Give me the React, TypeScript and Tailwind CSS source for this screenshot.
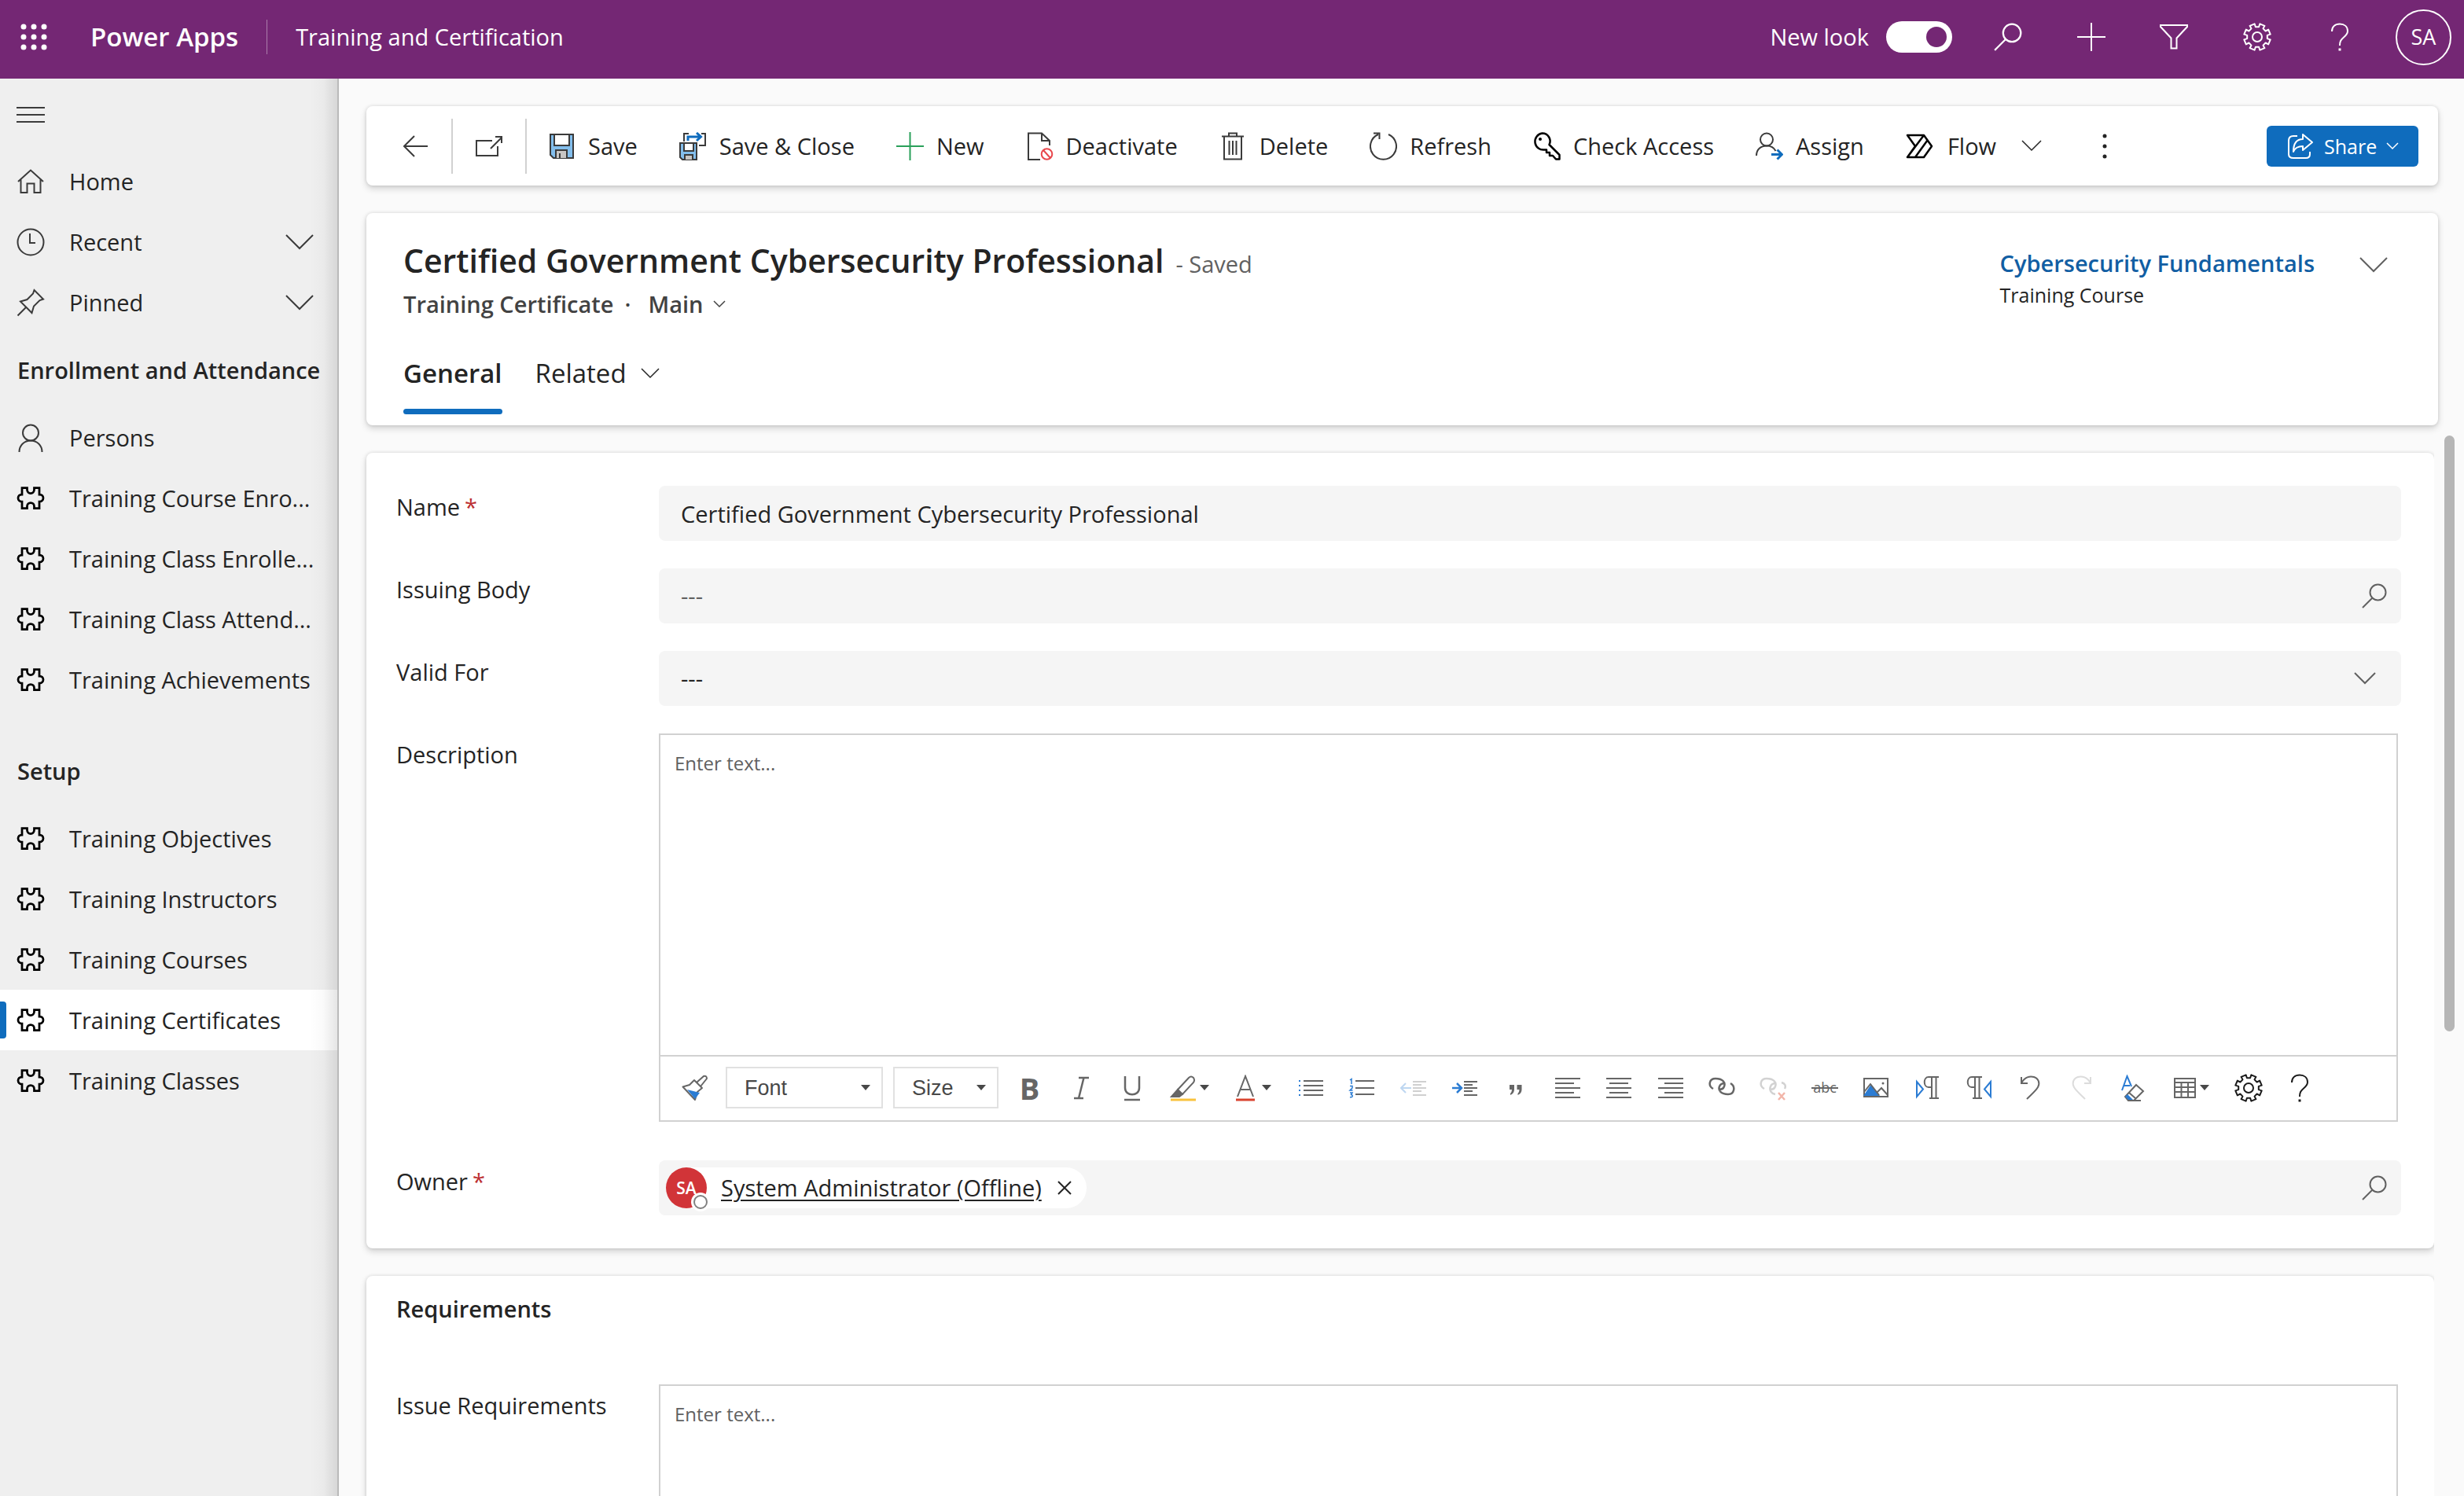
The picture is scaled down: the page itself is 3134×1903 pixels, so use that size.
import { useState, type ReactNode } from "react";

type IconProps = {
  w: number;
  h: number;
  stroke?: number;
  className?: string;
  children: ReactNode;
};

function Icon({ w, h, stroke = 2, className = "", children }: IconProps) {
  return (
    <svg
      width={w}
      height={h}
      viewBox={`0 0 ${w} ${h}`}
      fill="none"
      stroke="currentColor"
      strokeWidth={stroke}
      className={`shrink-0 ${className}`}
      aria-hidden="true"
    >
      {children}
    </svg>
  );
}

const gearPath = (() => {
  const points: string[] = [];
  for (let i = 0; i < 8; i++) {
    const mid = 22.5 + i * 45;
    const corners: [number, number][] = [
      [-13, 13],
      [-11, 17],
      [11, 17],
      [13, 13],
    ];
    corners.forEach(([offset, r]) => {
      const a = ((mid + offset) * Math.PI) / 180;
      points.push(`${(18 + r * Math.sin(a)).toFixed(1)} ${(18 - r * Math.cos(a)).toFixed(1)}`);
    });
  }
  return `M${points.join("L")}Z`;
})();

const GearIcon = () => (
  <Icon w={36} h={36}>
    <path d={gearPath} strokeLinejoin="round" />
    <circle cx="18" cy="18" r="6" />
  </Icon>
);

const HelpIcon = () => (
  <Icon w={24} h={36}>
    <path d="M2 11C2 5 6 1.500 12 1.500S22 5 22 10.500C22 14 20 16 17 18.500C13.500 21.500 12 23.500 12 29" />
    <path d="M12 32.500V35.500" strokeWidth="3" />
  </Icon>
);

const SearchIcon = ({ size = 32 }: { size?: number }) => (
  <svg width={size} height={size} viewBox="0 0 32 32" fill="none" stroke="currentColor" strokeWidth="2" aria-hidden="true">
    <circle cx="20.500" cy="11.500" r="10" />
    <path d="M13.500 18.500L1 31" />
  </svg>
);

const Chevron = ({ w = 26, stroke = 2 }: { w?: number; stroke?: number }) => (
  <Icon w={w} h={w / 2 + 2} stroke={stroke}>
    <path d={`M1 1L${w / 2} ${w / 2}L${w - 1} 1`} />
  </Icon>
);

const Caret = () => (
  <svg width="12" height="7" viewBox="0 0 12 7" fill="#484848" className="shrink-0" aria-hidden="true">
    <path d="M0 0H12L6 7Z" />
  </svg>
);

const PuzzleIcon = () => (
  <Icon w={36} h={30} stroke={2.75} className="text-black">
    <path d="M7 1.500H13.500V4a4.500 4.500 0 0 0 9 0V1.500H29V10H29.500a4.500 4.500 0 0 1 0 9H29V27.500H22.500V25a4.500 4.500 0 0 0-9 0V27.500H7V19H6.500a4.500 4.500 0 0 1 0-9H7Z" />
  </Icon>
);

const HomeIcon = () => (
  <Icon w={36} h={32}>
    <path d="M2 16L18 1.500L34 16M5.500 13V30H13.500V18.500H22.500V30H30.500V13" />
  </Icon>
);

const ClockIcon = () => (
  <Icon w={36} h={36}>
    <circle cx="18" cy="18" r="16.500" />
    <path d="M17 7V19H24" />
  </Icon>
);

const PinIcon = () => (
  <Icon w={36} h={36}>
    <path d="M22.500 2L34 13.500L29.500 15L22 22.500L19.500 31L5 16.500L13.500 14L21 6.500ZM12 24L1.500 34.500" />
  </Icon>
);

const PersonIcon = () => (
  <Icon w={36} h={36} className="text-[#3b3b3b]">
    <circle cx="18" cy="11.500" r="10" />
    <path d="M3.500 36C3.500 27.500 10 21.500 18 21.500S32.500 27.500 32.500 36" />
  </Icon>
);

const SaveIcon = () => (
  <Icon w={35} h={36} className="text-[#3b3b3b]">
    <path d="M3 3H32V33H7L3 29Z" fill="#83beec" />
    <path d="M8 3H27V17H8Z" fill="#fff" />
    <path d="M10 33V23H24V33" fill="#c8c6c4" />
    <path d="M15 33V27" />
  </Icon>
);

const SaveCloseIcon = () => (
  <Icon w={35} h={36} className="text-[#3b3b3b]">
    <path d="M6 12V2H12M28 2H33V17H25" />
    <path d="M1 14H22V35H4L1 32Z" fill="#83beec" />
    <path d="M6 14H18V24H6Z" fill="#fff" />
    <path d="M7 35V29H17V35" fill="#c8c6c4" />
    <path d="M11 11V6H27M22 1L27.500 6L22 11" stroke="#0f6cbd" strokeWidth="3" />
  </Icon>
);

const NewIcon = () => (
  <Icon w={35} h={36} className="text-[#2aa05a]">
    <path d="M17.500 0V36M0 18H35" />
  </Icon>
);

const DeactivateIcon = () => (
  <Icon w={35} h={36} className="text-[#3b3b3b]">
    <path d="M18 35H3V1.500H20L30 11V17M20 1.500V11H30" />
    <g stroke="#e8474c">
      <circle cx="26.500" cy="28" r="6.800" />
      <path d="M22 23L31 33" />
    </g>
  </Icon>
);

const DeleteIcon = () => (
  <Icon w={35} h={36} className="text-[#3b3b3b]">
    <path d="M3 5.500H31M12 5V1.500H22V5M6 6V34.500H28V6M12.500 11V29M17 11V29M21.500 11V29" />
  </Icon>
);

const RefreshIcon = () => (
  <Icon w={35} h={36} className="text-[#3b3b3b]">
    <path d="M24 3A16.500 16.500 0 1 1 11 3M5 1.500H12.500V9" />
  </Icon>
);

const KeyIcon = () => (
  <Icon w={35} h={36} className="text-black">
    <path
      d="M11.500 1.500A10 10 0 1 0 14.500 22.500L17 22.500V26H21V30H25L29 34.500H33.500V29L20.500 16A10 10 0 0 0 11.500 1.500Z"
      strokeLinejoin="round"
      strokeWidth="2.500"
    />
    <circle cx="9" cy="9" r="2" fill="currentColor" stroke="none" />
  </Icon>
);

const AssignIcon = () => (
  <Icon w={35} h={36} className="text-[#3b3b3b]">
    <circle cx="14" cy="9.500" r="8" />
    <path d="M1 30C1 22 6.500 17.500 14 17.500C20 17.500 23.500 20 25.500 24" />
    <path d="M20 28.500H33M27.500 22.500L33.500 28.500L27.500 34.500" stroke="#0f6cbd" strokeWidth="3" />
  </Icon>
);

const FlowIcon = () => (
  <Icon w={35} h={36} stroke={2.5} className="text-black">
    <path d="M2 4H23L33 18L23 32H2L12 18ZM23 4L2 32M27.500 10.500L12 32" strokeLinejoin="round" />
  </Icon>
);

const ShareIcon = () => (
  <Icon w={34} h={34}>
    <path
      d="M13 4H8Q2 4 2 10V27Q2 32 8 32H24Q29 32 29 27V24M20 2L32 12L20 22V17C14 17 10 19 8 24C8 14 12 8 20 8Z"
      strokeLinejoin="round"
    />
  </Icon>
);

function NavItem({
  icon,
  label,
  expandable,
  selected,
}: {
  icon: ReactNode;
  label: string;
  expandable?: boolean;
  selected?: boolean;
}) {
  return (
    <li>
      <a
        href="#"
        aria-current={selected ? "page" : undefined}
        className={`relative flex h-[77px] items-center gap-[31px] pr-[30px] pl-[21px] ${selected ? "bg-white" : ""}`}
      >
        {selected && <span className="absolute left-0 h-[47px] w-2 rounded-r bg-[#0f6cbd]" />}
        {icon}
        <span className="flex-1 whitespace-nowrap">{label}</span>
        {expandable && <Chevron w={36} />}
      </a>
    </li>
  );
}

const enrollmentItems = [
  "Training Course Enro...",
  "Training Class Enrolle...",
  "Training Class Attend...",
  "Training Achievements",
];

const setupItems = [
  "Training Objectives",
  "Training Instructors",
  "Training Courses",
  "Training Certificates",
  "Training Classes",
];

const commands = [
  { label: "Save", icon: <SaveIcon /> },
  { label: "Save & Close", icon: <SaveCloseIcon /> },
  { label: "New", icon: <NewIcon /> },
  { label: "Deactivate", icon: <DeactivateIcon /> },
  { label: "Delete", icon: <DeleteIcon /> },
  { label: "Refresh", icon: <RefreshIcon /> },
  { label: "Check Access", icon: <KeyIcon /> },
  { label: "Assign", icon: <AssignIcon /> },
];

// Rich text toolbar icons, all drawn on a 34px canvas
const editorIcons: { label: string; icon: ReactNode }[] = [
  {
    label: "Bulleted list",
    icon: (
      <>
        <path d="M8 8H33M8 14H33M8 20H33M8 26H33" />
        <path d="M2 8H4M2 14H4M2 20H4M2 26H4" stroke="#2b7cd3" />
      </>
    ),
  },
  {
    label: "Numbered list",
    icon: (
      <>
        <path d="M9 8H33M9 17H33M9 25H33" />
        <path
          d="M2 7L4 5.500V12M2 14.500H5V17L2 20H5.500M2 23H5L3.500 25.500Q6 26 5 28Q4 29 2 28.500"
          stroke="#2b7cd3"
          strokeWidth="1.500"
        />
      </>
    ),
  },
  {
    label: "Decrease indent",
    icon: (
      <g opacity="0.300">
        <path d="M16 9H33M16 13H27M16 17H33M16 21H27M16 26H33" />
        <path d="M1 17H14M7 11L1 17L7 23" stroke="#2b7cd3" />
      </g>
    ),
  },
  {
    label: "Increase indent",
    icon: (
      <>
        <path d="M16 9H33M16 13H27M16 17H33M16 21H27M16 26H33" />
        <path d="M1 17H13M7 11L13 17L7 23" stroke="#2b7cd3" strokeWidth="2.500" />
      </>
    ),
  },
  {
    label: "Block quote",
    icon: (
      <path
        d="M9 13H15V19Q15 24 10 26V24Q12 22 12 19H9ZM18.500 13H24.500V19Q24.500 24 19.500 26V24Q21.500 22 21.500 19H18.500Z"
        fill="#666"
        stroke="none"
      />
    ),
  },
  { label: "Align left", icon: <path d="M1 5H33M1 11H25M1 17H33M1 23H25M1 29H33" /> },
  { label: "Align center", icon: <path d="M1 5H33M5 11H29M1 17H33M5 23H29M1 29H33" /> },
  { label: "Align right", icon: <path d="M1 5H33M9 11H33M1 17H33M9 23H33M1 29H33" /> },
  {
    label: "Link",
    icon: (
      <path
        d="M6 18C-1 14 1 5 9 5C18 5 22 10 20 15C19 18 17 19 13 19M28 11C35 15 33 25 25 25C16 25 12 20 14 15C15 12 17 11 21 11"
        strokeWidth="2.500"
      />
    ),
  },
  {
    label: "Unlink",
    icon: (
      <>
        <path
          d="M6 18C-1 14 1 5 9 5C18 5 22 10 20 15C19 18 17 19 13 19M32 18C34 14 32 11 28 10M20 25C15 24 12 20 14 15C15 12 17 11 21 11"
          stroke="#d2d2d2"
          strokeWidth="2.500"
        />
        <path d="M24 23L32 32M32 23L24 32" stroke="#f2b5a9" strokeWidth="2.500" />
      </>
    ),
  },
  {
    label: "Strikethrough",
    icon: (
      <>
        <text x="17" y="23" textAnchor="middle" fontSize="18" fill="#666" stroke="none">
          abc
        </text>
        <path d="M0 17H34" />
      </>
    ),
  },
  {
    label: "Insert image",
    icon: (
      <>
        <path d="M2 5H32V28H2Z" />
        <path d="M3 26L11 14L20 26Z" fill="#2b7cd3" stroke="#2b7cd3" />
        <path d="M2 22L10 12L21 26M19 22L24 17L32 26" />
        <circle cx="26" cy="11" r="1.500" fill="#666" stroke="none" />
      </>
    ),
  },
  {
    label: "Left to right",
    icon: (
      <>
        <path d="M3 9L11 18.500L3 28Z" stroke="#2b7cd3" />
        <path d="M31 3H18C11 3 11 16 18 16H21M22 3V30M27.500 3V30M19 30H31" />
      </>
    ),
  },
  {
    label: "Right to left",
    icon: (
      <>
        <path d="M32 9L24 18.500L32 28Z" stroke="#2b7cd3" />
        <path d="M21 3H8C1 3 1 16 8 16H11M12 3V30M17.500 3V30M9 30H21" />
      </>
    ),
  },
  { label: "Undo", icon: <path d="M6 3V11H14M6 11C10 3 17 1.500 22 3C28 5 30 11 27 16C24 21 18 26 13 31" /> },
  {
    label: "Redo",
    icon: <path d="M28 3V11H20M28 11C24 3 17 1.500 12 3C6 5 4 11 7 16C10 21 16 26 21 31" stroke="#dcdcdc" />,
  },
  {
    label: "Clear formatting",
    icon: (
      <>
        <path d="M3 20L9.500 2L15 15M5 14H13" stroke="#2b7cd3" />
        <path d="M21 13L30 21L18 33H11L7 28Z" />
        <path d="M10 25L17 32H11L7 28Z" fill="#2b7cd3" stroke="none" />
        <path d="M17 33H27M12 23L20 30" />
      </>
    ),
  },
];

function ToolButton({ label, children }: { label: string; children: ReactNode }) {
  return (
    <button type="button" aria-label={label} title={label} className="flex h-full w-[65px] items-center justify-center">
      {children}
    </button>
  );
}

function EditorToolbar() {
  return (
    <div className="flex h-[83px] items-center border-t-2 border-[#d1d1d1] pb-0.5 pl-[11px] text-[#666]">
      <ToolButton label="Format painter">
        <Icon w={34} h={34}>
          <path d="M1.500 15.500L10 13L16 7L26 17L20 22L17 32Z" strokeLinejoin="round" />
          <path d="M7 19L23 23L17 31Z" fill="#2b7cd3" stroke="none" />
          <path d="M19 10L28 2Q32 1 32 5L24 15" />
        </Icon>
      </ToolButton>
      <div className="relative ml-[7px] flex items-center">
        <select
          aria-label="Font"
          className="h-[53px] w-[200px] appearance-none border-2 border-[#e1e1e1] bg-white pl-[22px] font-['Liberation_Sans',Arial,sans-serif] text-[27px] text-[#484848]"
        >
          <option>Font</option>
        </select>
        <span className="pointer-events-none absolute right-4">
          <Caret />
        </span>
      </div>
      <div className="relative ml-[13px] flex items-center">
        <select
          aria-label="Size"
          className="h-[53px] w-[134px] appearance-none border-2 border-[#e1e1e1] bg-white pl-[22px] font-['Liberation_Sans',Arial,sans-serif] text-[27px] text-[#484848]"
        >
          <option>Size</option>
        </select>
        <span className="pointer-events-none absolute right-4">
          <Caret />
        </span>
      </div>
      <div className="ml-[7px] flex h-full">
        <ToolButton label="Bold">
          <span className="text-[38px] leading-none font-bold">B</span>
        </ToolButton>
        <ToolButton label="Italic">
          <Icon w={34} h={34}>
            <path d="M14 4H27M8 30H20M20.500 4L14 30" strokeWidth="2.500" />
          </Icon>
        </ToolButton>
        <ToolButton label="Underline">
          <Icon w={34} h={34}>
            <path d="M8 2V17C8 28 26 28 26 17V2M7 32H27" strokeWidth="2.500" />
          </Icon>
        </ToolButton>
        <button type="button" aria-label="Highlight color" className="flex w-[81px] items-center justify-center gap-1">
          <Icon w={34} h={34}>
            <path d="M10 19L24 4Q27 1 30 4Q32 7 30 10L16 25Q12 24 10 19Z" />
            <path d="M10 19L16 25L12 28H2Z" fill="#666" />
            <path d="M1 32H33" stroke="#f9c23c" strokeWidth="3" />
          </Icon>
          <Caret />
        </button>
        <button type="button" aria-label="Font color" className="flex w-[81px] items-center justify-center gap-2">
          <Icon w={26} h={34}>
            <path d="M3 28L13 2L23 28M7 19H19" />
            <path d="M1 32H25" stroke="#d9432f" strokeWidth="3" />
          </Icon>
          <Caret />
        </button>
      </div>
      <div className="flex h-full w-[1112px]">
        {editorIcons.map(({ label, icon }) => (
          <button key={label} type="button" aria-label={label} title={label} className="flex flex-1 items-center justify-center">
            <Icon w={34} h={34}>
              {icon}
            </Icon>
          </button>
        ))}
      </div>
      <button type="button" aria-label="Table" className="flex h-full w-[81px] items-center justify-center gap-1">
        <Icon w={30} h={34}>
          <path d="M2 5H28V29H2ZM2 10H28M2 16H28M2 22H28M10.500 10V29M19 10V29" />
        </Icon>
        <Caret />
      </button>
      <span className="flex h-full text-[#1b1b1b]">
        <ToolButton label="Editor settings">
          <GearIcon />
        </ToolButton>
        <ToolButton label="Editor help">
          <HelpIcon />
        </ToolButton>
      </span>
    </div>
  );
}

function RichText({ id, toolbar }: { id: string; toolbar?: boolean }) {
  const [text, setText] = useState("");
  return (
    <div className="mr-1 flex min-w-0 flex-1 flex-col border-2 border-[#d1d1d1] bg-white">
      <textarea
        id={id}
        value={text}
        onChange={(e) => setText(e.target.value)}
        placeholder="Enter text..."
        className="block h-[407px] resize-none px-[18px] py-[18px] text-[24px] leading-9 outline-none placeholder:text-[#616161]"
      />
      {toolbar && <EditorToolbar />}
    </div>
  );
}

function Field({ id, label, required, children }: { id: string; label: string; required?: boolean; children: ReactNode }) {
  return (
    <div className="flex items-start">
      <label htmlFor={id} className="w-[334px] shrink-0 pt-[9px] leading-9">
        {label}
        {required && <span className="ml-[6px] text-[#bc2f32]">*</span>}
      </label>
      {children}
    </div>
  );
}

const cardShadow = "shadow-[0_0_4px_rgba(0,0,0,0.12),0_4px_9px_rgba(0,0,0,0.16)]";

export default function App() {
  const [newLook, setNewLook] = useState(true);
  const [name, setName] = useState("Certified Government Cybersecurity Professional");

  return (
    <div className="flex h-screen flex-col overflow-hidden bg-[#fafafa] font-['Segoe_UI','Open_Sans','Noto_Sans',sans-serif] text-[29px] leading-10 text-[#242424]">
      <header className="flex h-[100px] shrink-0 items-center bg-[#742774] pr-4 pb-[6px] pl-[25px] text-white">
        <button type="button" aria-label="App launcher">
          <svg width="36" height="36" viewBox="0 0 36 36" fill="currentColor" aria-hidden="true">
            {[5, 18, 31].map((y) => [5, 18, 31].map((x) => <circle key={`${x}-${y}`} cx={x} cy={y} r="3.500" />))}
          </svg>
        </button>
        <span className="ml-[54px] text-[33px] font-semibold">Power Apps</span>
        <span className="mx-9 h-11 w-px bg-white/40" />
        <span>Training and Certification</span>

        <div className="ml-auto flex items-center">
          <label className="flex cursor-pointer items-center gap-[22px]">
            New look
            <input
              type="checkbox"
              role="switch"
              checked={newLook}
              onChange={(e) => setNewLook(e.target.checked)}
              className="peer sr-only"
            />
            <span className="flex h-10 w-[84px] items-center rounded-full bg-white px-[7px] peer-checked:justify-end">
              <span className="size-[26px] rounded-full bg-[#742774]" />
            </span>
          </label>
          <div className="ml-[18px] flex">
            <button type="button" aria-label="Search" className="flex w-[106px] justify-center">
              <SearchIcon size={36} />
            </button>
            <button type="button" aria-label="Create" className="flex w-[105px] justify-center">
              <Icon w={36} h={36}>
                <path d="M18 0V36M0 18H36" />
              </Icon>
            </button>
            <button type="button" aria-label="Filter" className="flex w-[106px] justify-center">
              <Icon w={36} h={36}>
                <path d="M1 3H35V5L21.500 19.500V32.500H14.500V19.500L1 5Z" />
              </Icon>
            </button>
            <button type="button" aria-label="Settings" className="flex w-[105px] justify-center">
              <GearIcon />
            </button>
            <button type="button" aria-label="Help" className="flex w-[106px] justify-center">
              <HelpIcon />
            </button>
          </div>
          <button
            type="button"
            aria-label="Account"
            className="ml-[18px] flex size-[71px] items-center justify-center rounded-full border-2 border-white text-[27px]"
          >
            SA
          </button>
        </div>
      </header>

      <div className="flex min-h-0 flex-1">
        <nav className="relative w-[431px] shrink-0 border-r-2 border-[#bababa] bg-[#efefef]">
          <button type="button" aria-label="Site map" className="flex h-[92px] items-center pl-[21px] text-[#3b3b3b]">
            <Icon w={36} h={24}>
              <path d="M0 3H36M0 12H36M0 21H36" />
            </Icon>
          </button>
          <ul className="[&_svg]:text-[#3b3b3b]">
            <NavItem icon={<HomeIcon />} label="Home" />
            <NavItem icon={<ClockIcon />} label="Recent" expandable />
            <NavItem icon={<PinIcon />} label="Pinned" expandable />
          </ul>
          <h2 className="flex h-[95px] items-center pl-[22px] font-semibold whitespace-nowrap">Enrollment and Attendance</h2>
          <ul>
            <NavItem icon={<PersonIcon />} label="Persons" />
            {enrollmentItems.map((item) => (
              <NavItem key={item} icon={<PuzzleIcon />} label={item} />
            ))}
          </ul>
          <h2 className="mt-[30px] flex h-[95px] items-center pl-[22px] font-semibold">Setup</h2>
          <ul>
            {setupItems.map((item) => (
              <NavItem key={item} icon={<PuzzleIcon />} label={item} selected={item === "Training Certificates"} />
            ))}
          </ul>
          <div className="pointer-events-none absolute inset-y-0 right-0 w-9 bg-linear-to-r from-black/0 via-black/2 to-black/10" />
        </nav>

        <main className="flex min-w-0 flex-1 flex-col pt-[35px]">
          <div className={`mr-[33px] ml-[35px] flex h-[101px] shrink-0 items-center rounded-lg bg-white pr-[25px] ${cardShadow}`}>
            <button type="button" aria-label="Back" className="flex w-[108px] items-center justify-center pl-[16px] text-[#3b3b3b]">
              <Icon w={32} h={28}>
                <path d="M32 14H2M15 1L2 14L15 27" />
              </Icon>
            </button>
            <span className="h-[70px] w-0.5 bg-[#d1d1d1]" />
            <button type="button" aria-label="Open in new window" className="flex w-[92px] items-center justify-center text-[#3b3b3b]">
              <Icon w={36} h={28}>
                <path d="M22 7H2V26H29V14M20 17L34 3M26 2H34V10" />
              </Icon>
            </button>
            <span className="h-[70px] w-0.5 bg-[#d1d1d1]" />
            <div className="ml-[27px] flex items-center gap-[53px]">
              {commands.map(({ label, icon }) => (
                <button key={label} type="button" className="flex items-center gap-4 whitespace-nowrap">
                  {icon}
                  {label}
                </button>
              ))}
              <button type="button" className="flex items-center gap-[18px]">
                <FlowIcon />
                Flow
                <span className="ml-[14px]">
                  <Chevron stroke={1.5} />
                </span>
              </button>
            </div>
            <button type="button" aria-label="More commands" className="ml-[76px]">
              <svg width="8" height="32" viewBox="0 0 8 32" fill="currentColor" aria-hidden="true">
                <circle cx="4" cy="3" r="2.500" />
                <circle cx="4" cy="16" r="2.500" />
                <circle cx="4" cy="29" r="2.500" />
              </svg>
            </button>
            <button
              type="button"
              className="ml-auto flex h-[52px] w-[193px] items-center rounded-md bg-[#0f6cbd] pl-[26px] text-[25px] text-white"
            >
              <ShareIcon />
              <span className="ml-[13px]">Share</span>
              <span className="ml-3">
                <Chevron w={16} stroke={1.5} />
              </span>
            </button>
          </div>

          <section
            className={`mt-[35px] mr-[33px] ml-[35px] flex h-[270px] shrink-0 justify-between rounded-lg bg-white pr-16 pl-[47px] ${cardShadow}`}
          >
            <div className="pt-8">
              <div className="flex items-baseline gap-[15px] leading-[56px]">
                <h1 className="text-[41px] font-semibold">Certified Government Cybersecurity Professional</h1>
                <span className="text-[29px] text-[#616161]">- Saved</span>
              </div>
              <div className="flex h-[46px] items-center font-semibold text-[#424242]">
                Training Certificate
                <span className="mr-[22px] ml-[14px]">·</span>
                <button type="button" className="flex items-center gap-3">
                  Main
                  <Chevron w={16} stroke={1.5} />
                </button>
              </div>
              <div role="tablist" className="mt-5 flex gap-[42px] text-[33px]">
                <button type="button" role="tab" aria-selected="true" className="flex flex-col font-semibold">
                  <span className="flex h-[90px] items-center">General</span>
                  <span className="h-[7px] w-full rounded-full bg-[#0f6cbd]" />
                </button>
                <button type="button" role="tab" aria-selected="false" className="flex h-[90px] items-center gap-[18px]">
                  Related
                  <Chevron w={24} stroke={1.5} />
                </button>
              </div>
            </div>
            <div className="flex items-start gap-[57px] pt-11">
              <div>
                <a href="#" className="block font-semibold text-[#115ea3]">
                  Cybersecurity Fundamentals
                </a>
                <span className="block text-[25px]">Training Course</span>
              </div>
              <button type="button" aria-label="Expand header" className="pt-3 text-[#616161]">
                <Chevron w={36} />
              </button>
            </div>
          </section>

          <div className="flex min-h-0 flex-1">
            <div className="min-w-0 flex-1 overflow-hidden pt-[35px] pl-[35px]">
              <section className={`flex flex-col gap-[35px] rounded-lg bg-white py-[42px] pr-[42px] pl-[38px] ${cardShadow}`}>
                <Field id="name" label="Name" required>
                  <input
                    id="name"
                    value={name}
                    onChange={(e) => setName(e.target.value)}
                    className="h-[70px] min-w-0 flex-1 rounded-lg bg-[#f5f5f5] px-7 outline-none"
                  />
                </Field>
                <Field id="issuing" label="Issuing Body">
                  <div className="flex h-[70px] min-w-0 flex-1 items-center rounded-lg bg-[#f5f5f5] pr-[18px] pl-7 text-[#616161]">
                    <input id="issuing" placeholder="---" className="min-w-0 flex-1 outline-none placeholder:text-[#616161]" />
                    <button type="button" aria-label="Search issuing body">
                      <SearchIcon />
                    </button>
                  </div>
                </Field>
                <Field id="valid-for" label="Valid For">
                  <div className="relative flex min-w-0 flex-1 items-center">
                    <select id="valid-for" className="h-[70px] w-full appearance-none rounded-lg bg-[#f5f5f5] px-7 outline-none">
                      <option>---</option>
                    </select>
                    <span className="pointer-events-none absolute right-8 text-[#616161]">
                      <Chevron w={28} />
                    </span>
                  </div>
                </Field>
                <Field id="description" label="Description">
                  <RichText id="description" toolbar />
                </Field>
                <div className="pt-[14px]">
                  <Field id="owner" label="Owner" required>
                    <div className="flex h-[70px] min-w-0 flex-1 items-center justify-between rounded-lg bg-[#f5f5f5] pr-[18px] pl-[9px]">
                      <div className="flex h-[52px] items-center rounded-full bg-white pr-[19px]">
                        <span className="relative flex size-[52px] items-center justify-center rounded-full bg-[#d13438] text-[21px] font-semibold text-white">
                          SA
                          <span className="absolute -right-1 -bottom-1 flex size-[24px] items-center justify-center rounded-full bg-white">
                            <span className="size-[18px] rounded-full border-2 border-[#808080]" />
                          </span>
                        </span>
                        <a href="#" className="ml-[18px] underline decoration-2 underline-offset-4">
                          System Administrator (Offline)
                        </a>
                        <button id="owner" type="button" aria-label="Remove owner" className="ml-5">
                          <Icon w={18} h={18}>
                            <path d="M1 1L17 17M17 1L1 17" />
                          </Icon>
                        </button>
                      </div>
                      <button type="button" aria-label="Search owner" className="text-[#616161]">
                        <SearchIcon />
                      </button>
                    </div>
                  </Field>
                </div>
              </section>

              <section className={`mt-[35px] rounded-lg bg-white pt-[22px] pr-[42px] pb-[42px] pl-[38px] ${cardShadow}`}>
                <h2 className="mb-[76px] font-semibold">Requirements</h2>
                <Field id="issue-requirements" label="Issue Requirements">
                  <RichText id="issue-requirements" />
                </Field>
              </section>
            </div>
            <div className="w-[38px] shrink-0 pt-[13px] pl-[13px]">
              <div className="h-[758px] w-[13px] rounded-full bg-[#b6b6b6]" />
            </div>
          </div>
        </main>
      </div>
    </div>
  );
}
